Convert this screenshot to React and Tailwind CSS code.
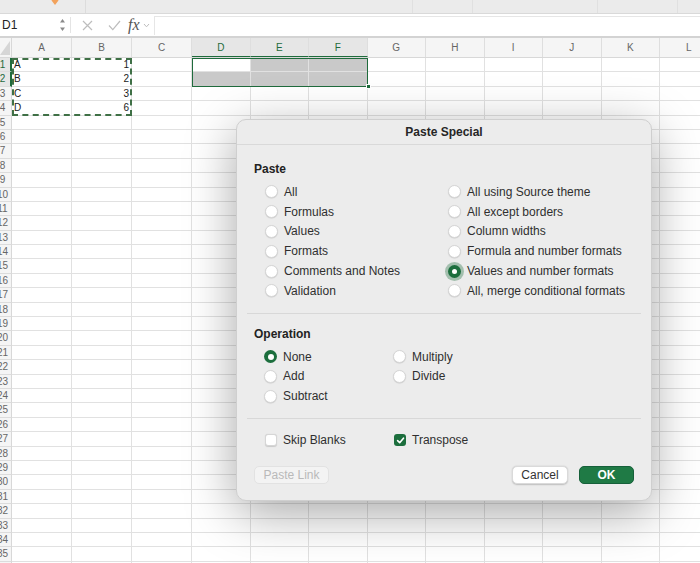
import React from 'react';

const COLS = [
  { id: 'A', w: 'w-[60px]' },
  { id: 'B', w: 'w-[60px]' },
  { id: 'C', w: 'w-[60px]' },
  { id: 'D', w: 'w-[58.5px]' },
  { id: 'E', w: 'w-[58.5px]' },
  { id: 'F', w: 'w-[58.5px]' },
  { id: 'G', w: 'w-[58.5px]' },
  { id: 'H', w: 'w-[58.5px]' },
  { id: 'I', w: 'w-[58.5px]' },
  { id: 'J', w: 'w-[58.5px]' },
  { id: 'K', w: 'w-[58.5px]' },
  { id: 'L', w: 'w-[58.5px]' },
];

const DATA = { 1: ['A', '1'], 2: ['B', '2'], 3: ['C', '3'], 4: ['D', '6'] };
const ROWS = Array.from({ length: 36 }, (_, i) => i + 1);

const PASTE_LEFT = ['All', 'Formulas', 'Values', 'Formats', 'Comments and Notes', 'Validation'];
const PASTE_RIGHT = [
  'All using Source theme',
  'All except borders',
  'Column widths',
  'Formula and number formats',
  'Values and number formats',
  'All, merge conditional formats',
];

function Radio({ checked, focus }) {
  if (checked) {
    return (
      <span
        className={`w-[13px] h-[13px] rounded-full bg-[#1c6e3d] flex items-center justify-center shrink-0 ${
          focus ? 'ring-[3px] ring-[#1c6e3d]/35' : ''
        }`}
      >
        <span className={`${focus ? 'w-[5px] h-[5px]' : 'w-[6px] h-[6px]'} rounded-full bg-white`} />
      </span>
    );
  }
  return (
    <span className="w-[13px] h-[13px] rounded-full bg-white border border-[#d6d6d6] shadow-[0_0.5px_1px_rgba(0,0,0,0.15)] shrink-0" />
  );
}

function Option({ label, checked, focus }) {
  return (
    <div className="h-[19.8px] flex items-center gap-[6px]">
      <Radio checked={checked} focus={focus} />
      <span className="text-[12px] text-[#2f2f2f] whitespace-nowrap">{label}</span>
    </div>
  );
}

function Check({ checked, label }) {
  return (
    <div className="flex items-center gap-[6px]">
      {checked ? (
        <span className="w-[12px] h-[12px] rounded-[3px] bg-[#1c6e3d] flex items-center justify-center">
          <svg width="9" height="9" viewBox="0 0 10 10">
            <path d="M1.8 5.2 L4.1 7.5 L8.3 2.4" fill="none" stroke="white" strokeWidth="1.8" strokeLinecap="round" strokeLinejoin="round" />
          </svg>
        </span>
      ) : (
        <span className="w-[12px] h-[12px] rounded-[3px] bg-white border border-[#d6d6d6] shadow-[0_0.5px_1px_rgba(0,0,0,0.15)]" />
      )}
      <span className="text-[12px] text-[#2f2f2f]">{label}</span>
    </div>
  );
}

function PasteSpecial() {
  return (
    <div className="absolute left-[236px] top-[119px] w-[416px] h-[382px] rounded-[10px] bg-[#ececec] border border-[#cfcfcf] shadow-[0_12px_50px_rgba(0,0,0,0.35)] flex flex-col">
      <div className="h-[25px] border-b border-[#d9d9d9] flex items-center justify-center">
        <span className="text-[12px] font-bold text-[#262626]">Paste Special</span>
      </div>

      <div className="px-[10px] flex flex-col">
        <div className="pl-[7px] mt-[17px] text-[12px] font-bold text-[#222] leading-[15px]">Paste</div>
        <div className="grid grid-cols-[183px_1fr] pl-[18px] mt-[5px]">
          <div className="flex flex-col">
            {PASTE_LEFT.map((l) => (
              <Option key={l} label={l} />
            ))}
          </div>
          <div className="flex flex-col">
            {PASTE_RIGHT.map((l) => (
              <Option key={l} label={l} checked={l === 'Values and number formats'} focus />
            ))}
          </div>
        </div>

        <div className="h-px bg-[#d8d8d8] mt-[12px]" />

        <div className="pl-[7px] mt-[13px] text-[12px] font-bold text-[#222] leading-[15px]">Operation</div>
        <div className="grid grid-cols-[129px_1fr] pl-[17px] mt-[5px]">
          <div className="flex flex-col">
            <Option label="None" checked />
            <Option label="Add" />
            <Option label="Subtract" />
          </div>
          <div className="flex flex-col">
            <Option label="Multiply" />
            <Option label="Divide" />
          </div>
        </div>

        <div className="h-px bg-[#d8d8d8] mt-[12px]" />

        <div className="grid grid-cols-[129px_1fr] pl-[18px] h-[20px] items-center mt-[11px]">
          <Check label="Skip Blanks" />
          <Check label="Transpose" checked />
        </div>

        <div className="flex items-center mt-[16px] px-[7px]">
          <button className="w-[75px] h-[18px] rounded-[5px] bg-[#f3f3f3] border border-[#e2e2e2] text-[12px] text-[#b9b9b9] leading-none">
            Paste Link
          </button>
          <div className="flex-1" />
          <button className="w-[56px] h-[18px] rounded-[5px] bg-white border border-[#dadada] shadow-[0_0.5px_1.5px_rgba(0,0,0,0.2)] text-[12px] text-[#333] leading-none">
            Cancel
          </button>
          <button className="ml-[11px] w-[55px] h-[18px] rounded-[5px] bg-[#1f7a45] border border-[#16603a] text-[12px] font-bold text-white leading-none">
            OK
          </button>
        </div>
      </div>
    </div>
  );
}

function FormulaBar() {
  return (
    <div className="h-[23px] bg-white flex items-center border-t border-[#d9d9d9]">
      <div className="w-[70px] h-full flex items-center pl-[2px] relative">
        <span className="text-[12px] text-[#222]">D1</span>
        <svg className="absolute left-[59px] top-[4px]" width="7" height="14" viewBox="0 0 7 14">
          <path d="M3.5 1 L6 4.5 L1 4.5 Z" fill="#8a8a8a" />
          <path d="M3.5 13 L6 9.5 L1 9.5 Z" fill="#8a8a8a" />
        </svg>
      </div>
      <div className="w-px h-[16px] bg-[#e4e4e4]" />
      <svg className="ml-[11px]" width="11" height="11" viewBox="0 0 11 11">
        <path d="M1 1 L10 10 M10 1 L1 10" stroke="#bdbdbd" strokeWidth="1.2" />
      </svg>
      <svg className="ml-[15px]" width="13" height="11" viewBox="0 0 13 11">
        <path d="M1 5.5 L4.8 9.6 L12 1" fill="none" stroke="#bdbdbd" strokeWidth="1.2" />
      </svg>
      <span className="ml-[7px] text-[16px] italic text-[#555] font-['Liberation_Serif',serif] leading-none">fx</span>
      <svg className="ml-[3px]" width="7" height="5" viewBox="0 0 7 5">
        <path d="M1 1 L3.5 3.8 L6 1" fill="none" stroke="#bdbdbd" strokeWidth="1" />
      </svg>
      <div className="ml-[4px] flex-1 h-[19px] border-l border-t border-[#e6e6e6] bg-white" />
    </div>
  );
}

function Toolbar() {
  return (
    <div className="h-[13px] bg-[#ebebeb] relative flex">
      <svg className="absolute left-[50px] top-[-4px]" width="10" height="10" viewBox="0 0 10 10">
        <path d="M5 9 L1.5 4.5 L5 0 L8.5 4.5 Z" fill="#f2a25c" />
      </svg>
      <div className="w-[86px] border-r border-[#dcdcdc]" />
      <div className="w-[327px] border-r border-[#e0e0e0]" />
      <div className="w-[60px] border-r border-[#e0e0e0]" />
      <div className="w-[125px] border-r border-[#e0e0e0]" />
      <div className="w-[80px] border-r border-[#e0e0e0]" />
    </div>
  );
}

function Grid() {
  return (
    <div className="relative">
      {/* column header */}
      <div className="h-[20px] flex bg-[#f5f5f5] border-b border-[#d8d8d8]">
        <div className="w-[12px] shrink-0 border-r border-[#d8d8d8] relative overflow-hidden">
          <svg className="absolute left-0 top-[2px]" width="11" height="16" viewBox="0 0 11 16">
            <path d="M10 1 L10 15 L0 15 Z" fill="#d6d6d6" />
          </svg>
        </div>
        {COLS.map((c) => {
          const sel = c.id === 'D' || c.id === 'E' || c.id === 'F';
          return (
            <div
              key={c.id}
              className={`${c.w} shrink-0 border-r border-[#dedede] flex items-center justify-center text-[10px] ${
                sel ? 'bg-[#e6e6e6] text-[#1f6b3c] border-b border-b-[#1f6b3c]' : 'text-[#666]'
              }`}
            >
              {c.id}
            </div>
          );
        })}
      </div>

      {ROWS.map((r) => {
        const selRow = r === 1 || r === 2;
        return (
          <div key={r} className="h-[14.4px] flex">
            <div
              className={`w-[12px] shrink-0 overflow-hidden border-b border-[#dcdcdc] ${
                selRow ? 'bg-[#e6e6e6] border-r-2 border-r-[#1f6b3c]' : 'bg-[#f5f5f5] border-r border-r-[#d8d8d8]'
              }`}
            >
              <div
                className={`ml-[-10px] w-[25px] text-center text-[10px] leading-[14px] ${
                  selRow ? 'text-[#1f6b3c]' : 'text-[#666]'
                }`}
              >
                {r}
              </div>
            </div>
            {COLS.map((c, ci) => {
              const grey =
                (r === 1 && (c.id === 'E' || c.id === 'F')) ||
                (r === 2 && (c.id === 'D' || c.id === 'E' || c.id === 'F'));
              const val = DATA[r] && ci < 2 ? DATA[r][ci] : '';
              return (
                <div
                  key={c.id}
                  className={`${c.w} shrink-0 border-r border-b border-[#e1e1e1] text-[10px] leading-[13px] text-[#222] px-[2px] ${
                    ci === 1 ? 'text-right' : 'text-left'
                  } ${grey ? 'bg-[#c9c9c9]' : 'bg-white'}`}
                >
                  {val}
                </div>
              );
            })}
          </div>
        );
      })}

      {/* copy range marquee */}
      <div className="absolute left-[12px] top-[20px] w-[120px] h-[57.6px] border-2 border-dashed border-[#3f7046] pointer-events-none" />
      {/* selection */}
      <div className="absolute left-[192px] top-[20px] w-[176px] h-[28.8px] border border-[#1f6b3c] pointer-events-none" />
      <div className="absolute left-[365.5px] top-[46.3px] w-[5px] h-[5px] bg-[#1f6b3c] border border-white pointer-events-none" />
    </div>
  );
}

export default function App() {
  return (
    <div className="w-[700px] h-[563px] relative overflow-hidden bg-white font-['Liberation_Sans',Arial,sans-serif]">
      <Toolbar />
      <FormulaBar />
      <div className="h-[2px] bg-[#d3d3d3]" />
      <Grid />
      <PasteSpecial />
    </div>
  );
}
